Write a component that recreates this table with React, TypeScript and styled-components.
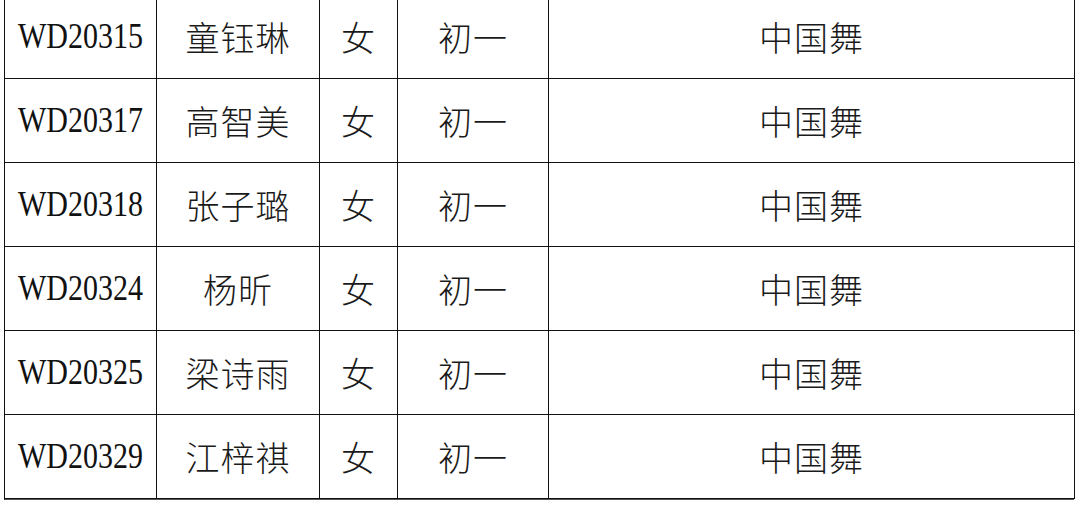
import React from 'react'
import styled, { createGlobalStyle } from 'styled-components'

const GlobalStyle = createGlobalStyle`
  html, body {
    margin: 0;
    padding: 0;
    background: #ffffff;
  }
  body {
    font-family: "Noto Sans CJK SC", "Liberation Serif", serif;
    color: #111;
  }
`

type Row = {
  code: string
  name: string
  gender: string
  grade: string
  item: string
}

const ROWS: Row[] = [
  { code: 'WD20315', name: '童钰琳', gender: '女', grade: '初一', item: '中国舞' },
  { code: 'WD20317', name: '高智美', gender: '女', grade: '初一', item: '中国舞' },
  { code: 'WD20318', name: '张子璐', gender: '女', grade: '初一', item: '中国舞' },
  { code: 'WD20324', name: '杨昕', gender: '女', grade: '初一', item: '中国舞' },
  { code: 'WD20325', name: '梁诗雨', gender: '女', grade: '初一', item: '中国舞' },
  { code: 'WD20329', name: '江梓祺', gender: '女', grade: '初一', item: '中国舞' },
]

const Page = styled.div`
  height: 508px;
  overflow: hidden;
  padding-left: 4px;
`

const Grid = styled.div`
  margin-top: -6px;
  width: 1070px;
  display: grid;
  grid-template-columns: 152px 163px 78px 151px 526px;
  grid-auto-rows: 84px;
  border-top: 1px solid #111;
  border-left: 1px solid #111;
  border-bottom: 1px solid #555;
  box-sizing: border-box;
`

const Cell = styled.div`
  box-sizing: border-box;
  border-right: 1px solid #111;
  border-bottom: 1px solid #111;
  display: flex;
  align-items: center;
  justify-content: center;
  font-family: "Noto Sans CJK SC", sans-serif;
  font-weight: 300;
  font-size: 34px;
  letter-spacing: 1px;
  color: #1a1a1a;
`

const Code = styled.span`
  display: inline-block;
  font-family: "Liberation Serif", "Times New Roman", serif;
  font-size: 30px;
  line-height: 1;
  letter-spacing: 0;
  color: #111;
  transform: translateY(-1px) scaleY(1.18);
`

export default function App() {
  return (
    <>
      <GlobalStyle />
      <Page>
        <Grid>
          {ROWS.map((r) => (
            <React.Fragment key={r.code}>
              <Cell>
                <Code>{r.code}</Code>
              </Cell>
              <Cell>{r.name}</Cell>
              <Cell>{r.gender}</Cell>
              <Cell>{r.grade}</Cell>
              <Cell>{r.item}</Cell>
            </React.Fragment>
          ))}
        </Grid>
      </Page>
    </>
  )
}
